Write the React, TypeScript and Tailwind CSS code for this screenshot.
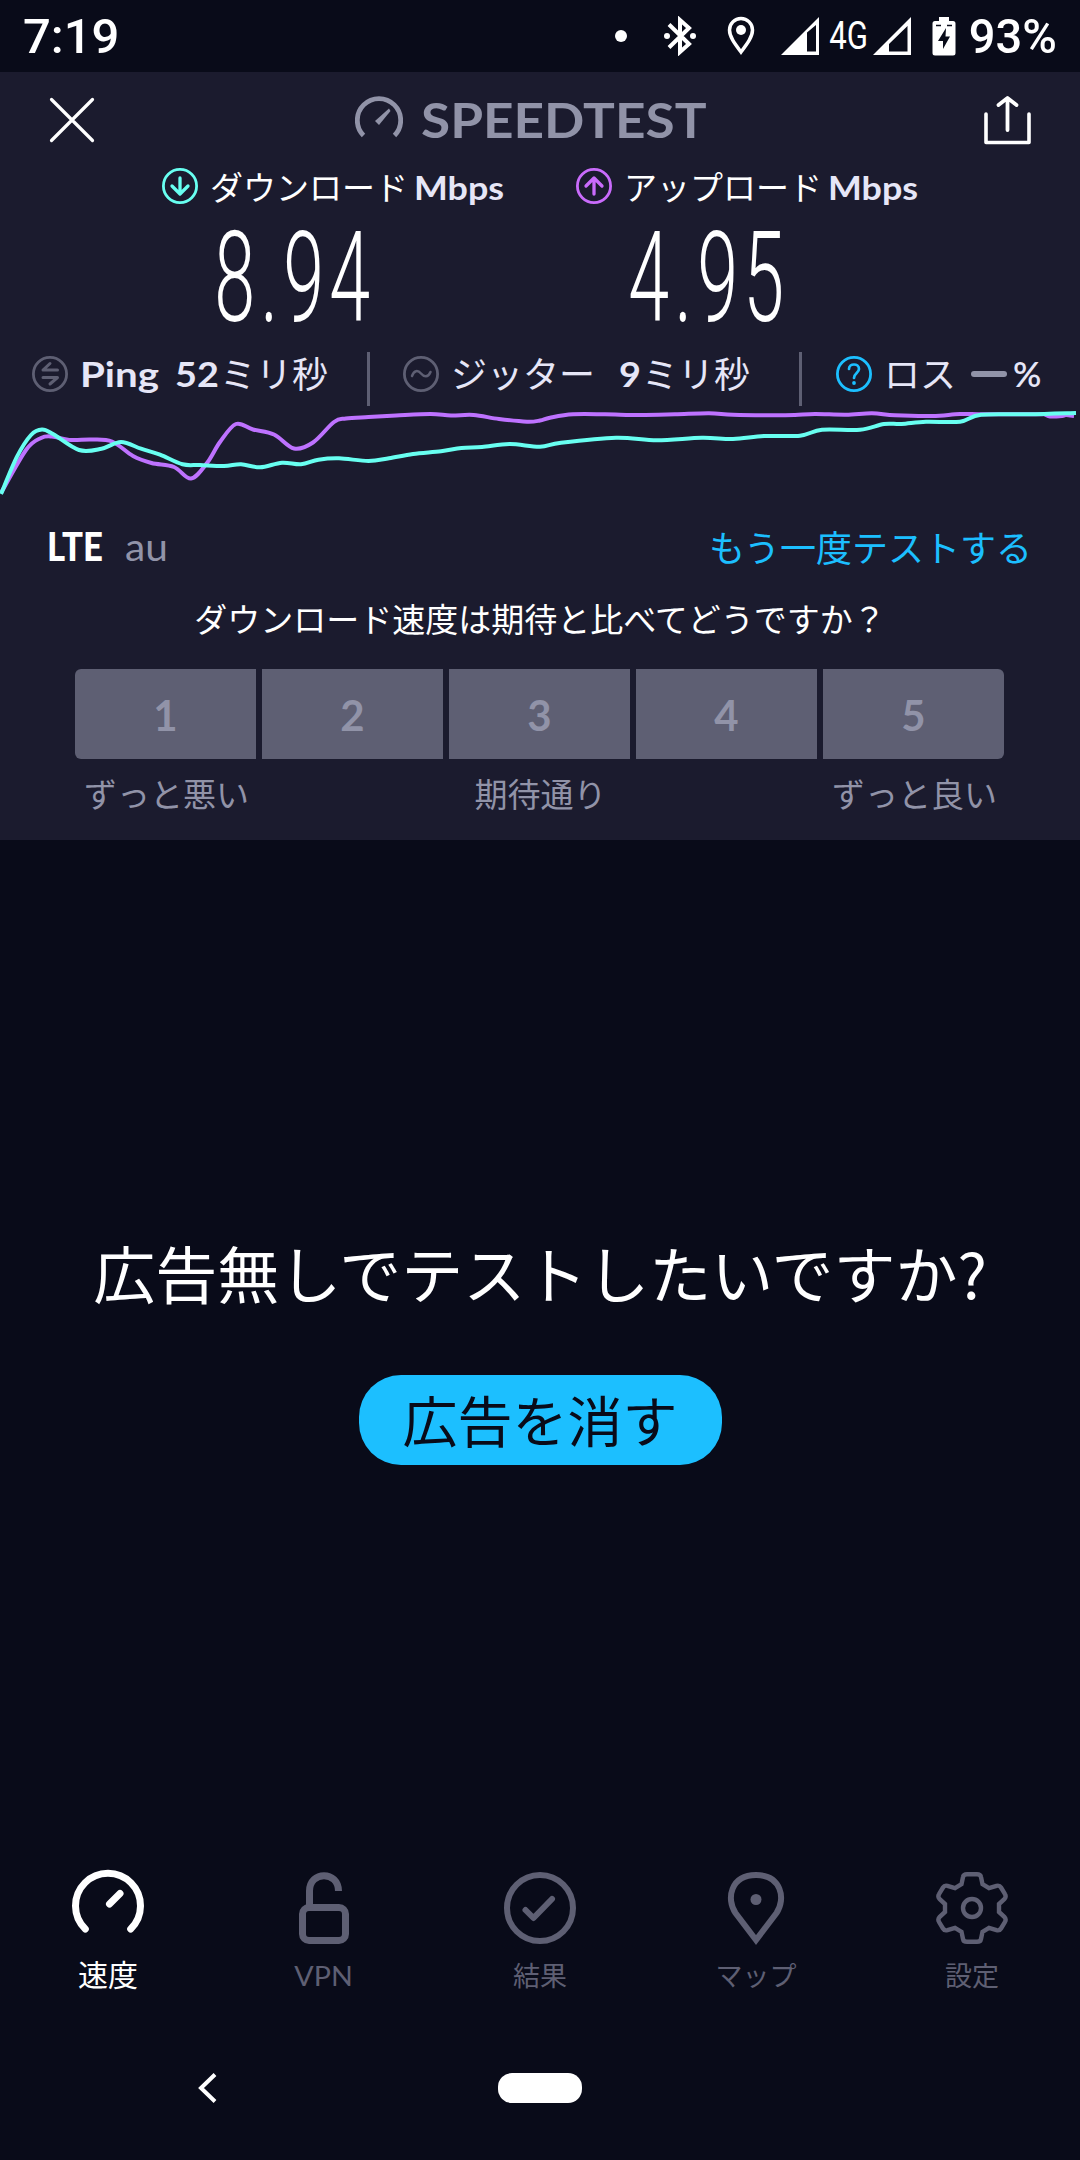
import type { ReactNode } from "react";

const JP = "font-['Noto_Sans_CJK_JP',sans-serif]";

type Pt = [number, number];

const uploadPoints: Pt[] = [
  [1, 493], [26, 450], [41, 438], [52, 436.5], [71, 440], [91, 439.5], [112, 441.5], [133, 456],
  [151.5, 463], [174, 467], [191, 478.5], [207, 463], [220, 442], [236, 424], [253, 429.5], [274, 434.5],
  [294, 448.5], [313, 442.5], [334, 422], [346, 418.5], [368.5, 417], [396, 415.5], [430.5, 414],
  [451, 415.5], [473.5, 415], [499, 419], [527, 421.7], [540, 420.5], [550, 417.7], [573, 414.3],
  [605, 414.3], [640, 415], [675, 414.3], [709, 413.3], [733, 414.7], [774, 415.3], [795, 415], [815, 414],
  [846, 414.7], [872, 413.3], [895, 415.3], [932.5, 416], [960, 414], [984, 414.3], [1036, 414.3],
  [1044, 414.3], [1050, 416.5], [1062, 416], [1066, 415], [1074, 416],
];

const downloadPoints: Pt[] = [
  [1, 494], [17, 456.7], [31, 435], [42, 429.5], [53, 434], [79, 450], [101.5, 448.7], [121, 442],
  [141, 448.7], [160, 454.7], [182.5, 464.3], [200, 465], [224, 466], [241, 464.3], [260, 467.3],
  [282, 462.7], [301, 464.3], [318.5, 459.7], [339, 458.3], [368.5, 461], [389, 458.3], [413, 454],
  [441, 451.3], [461.5, 448], [482, 447], [509.6, 444], [540, 446.7], [561, 442.7], [616, 437.7],
  [657, 440.3], [702, 437.7], [733, 439], [764, 436], [800, 435.7], [822, 429.7], [860, 429.7],
  [884, 424], [901.5, 424], [926, 421.7], [960, 421.7], [981, 414.7], [1029, 414.3], [1076, 413],
];

function smooth(p: Pt[]): string {
  let d = `M${p[0][0]} ${p[0][1]}`;
  for (let i = 0; i < p.length - 1; i++) {
    const a = p[Math.max(i - 1, 0)];
    const b = p[i];
    const c = p[i + 1];
    const e = p[Math.min(i + 2, p.length - 1)];
    d += `C${b[0] + (c[0] - a[0]) / 6} ${b[1] + (c[1] - a[1]) / 6} ${c[0] - (e[0] - b[0]) / 6} ${c[1] - (e[1] - b[1]) / 6} ${c[0]} ${c[1]}`;
  }
  return d;
}

function StatusBar() {
  return (
    <div className="flex h-[72px] items-center font-[Roboto,sans-serif] text-white">
      <span className="ml-[23px] pt-[2px] text-[49px] font-medium leading-[72px]">7:19</span>
      <div className="ml-auto mr-[22px] flex items-center">
        <span className="mr-[37px] size-3 rounded-full bg-white" />
        <svg className="mr-[31px]" width="32" height="40" viewBox="0 0 32 40" fill="none" stroke="#fff">
          <path d="M5 8.500L25 28L16 36V4L25 12L5 31.500" strokeWidth="4" />
          <circle cx="3" cy="20" r="3" fill="#fff" stroke="none" />
          <circle cx="29" cy="20" r="3" fill="#fff" stroke="none" />
        </svg>
        <svg className="mr-[26px]" width="28" height="40" viewBox="0 0 28 40" fill="none" stroke="#fff">
          <path d="M14 36C8 28 2.500 21 2.500 14A11.500 11.500 0 0 1 25.500 14C25.500 21 20 28 14 36Z" strokeWidth="3.500" />
          <circle cx="14" cy="14" r="5" fill="#fff" stroke="none" />
        </svg>
        <svg className="mr-[11px]" width="38" height="38" viewBox="0 0 38 38">
          <path fillRule="evenodd" d="M0 38L38 0V38ZM26 15.500V34.500H35V8Z" fill="#fff" />
        </svg>
        <span className="flex w-[38px] justify-center">
          <span className="scale-x-[0.82] text-[38px] leading-[72px]">4G</span>
        </span>
        <svg className="ml-[5px] mr-[21px]" width="38" height="38" viewBox="0 0 38 38">
          <path fillRule="evenodd" d="M0 38L38 0V38ZM16 27V34.500H34.500V9Z" fill="#fff" />
        </svg>
        <svg className="mr-[11px]" width="24" height="40" viewBox="0 0 24 40">
          <path d="M7 1H17V5H21Q23.500 5 23.500 7.500V37Q23.500 39.500 21 39.500H3Q.5 39.500 .5 37V7.500Q.5 5 3 5H7Z" fill="#fff" />
          <path d="M4 9.500H9M15 9.500H20" stroke="#090b19" strokeWidth="1.300" />
          <path d="M14 12L6 25H11V33L18 20.500H13.500Z" fill="#090b19" />
        </svg>
        <span className="flex w-[91px] justify-center">
          <span className="scale-x-[0.96] pt-[2px] text-[49px] font-medium leading-[72px]">93%</span>
        </span>
      </div>
    </div>
  );
}

function Header() {
  return (
    <div className="flex h-[90px] items-start">
      <svg className="ml-[48px] mt-[24px]" width="48" height="48" viewBox="0 0 48 48">
        <path d="M3.500 3.500L44.500 44.500M44.500 3.500L3.500 44.500" stroke="#fff" strokeWidth="3.200" strokeLinecap="round" />
      </svg>
      <div className="ml-[259px] mt-[24px] flex items-start text-[#9193a8]">
        <svg width="48" height="42" viewBox="0 0 48 42">
          <path d="M8.500 39.500A21.700 21.700 0 1 1 39.500 39.500" fill="none" stroke="currentColor" strokeWidth="4.800" />
          <path d="M20 25L34 12.500L35.500 15L24 29Z" fill="currentColor" />
        </svg>
        <span className="ml-[18px] block w-[300px] origin-left scale-x-[1.13] whitespace-nowrap font-[Lato,sans-serif] text-[47px] font-bold leading-[49px]">
          SPEEDTEST
        </span>
      </div>
      <svg className="ml-auto mr-[48px] mt-[24px]" width="49" height="49" viewBox="0 0 49 49" fill="none" stroke="#fff" strokeLinecap="round" strokeLinejoin="round">
        <path d="M3 18V46.500H46V18" strokeWidth="3.600" />
        <path d="M24.500 34V3M15.500 9L24.500 2L33.500 9" strokeWidth="3.800" />
      </svg>
    </div>
  );
}

function RoundArrow({ up = false }: { up?: boolean }) {
  return (
    <svg width="36" height="36" viewBox="0 0 36 36" fill="none" stroke={up ? "#c96bfb" : "#68fff1"} strokeLinecap="round" strokeLinejoin="round">
      <circle cx="18" cy="18" r="16.600" strokeWidth="2.800" />
      {up ? <path d="M18 26V10.500M10 18L18 10L26 18" strokeWidth="3.300" /> : <path d="M18 10V25.500M10 18L18 26L26 18" strokeWidth="3.300" />}
    </svg>
  );
}

function Speed({ up, label, value }: { up?: boolean; label: string; value: string }) {
  return (
    <div className="w-[360px]">
      <div className="flex h-12 items-center">
        <RoundArrow up={up} />
        <span className={`${JP} ml-[12px] text-[33px] leading-[48px] text-white`}>{label}</span>
        <span className="ml-[6px] mt-[3px] origin-left scale-x-[1.12] font-[Lato,sans-serif] text-[32px] font-bold leading-[45px] text-[#e6e6f7]">Mbps</span>
      </div>
      <div className="flex h-[120px] w-[266px] justify-center pt-[13px]">
        <span className="h-[107px] scale-x-[0.58] font-[Roboto,sans-serif] text-[127px] font-light leading-[109px] tracking-[9px] text-white">{value}</span>
      </div>
    </div>
  );
}

function Stats() {
  return (
    <div className="flex h-[56px] items-center text-[#e6e6f7]">
      <svg className="mb-[10px] ml-[32px]" width="36" height="36" viewBox="-18 -18 36 36" fill="none" stroke="#5e5f73" strokeLinecap="round" strokeLinejoin="round">
        <circle r="16.600" strokeWidth="2.800" />
        <path d="M7.500 -4H-7L0 -10.500M-7 3.500H7.500L0 10" strokeWidth="3" />
      </svg>
      <span className="mb-[11px] ml-[12px] w-[95px] origin-left scale-x-[1.15] font-[Lato,sans-serif] text-[35px] font-bold leading-[45px]">Ping</span>
      <span className="mb-[11px] flex w-[192px] items-center whitespace-nowrap">
        <span className="w-[45px] origin-left scale-x-[1.08] font-[Lato,sans-serif] text-[35px] font-bold leading-[45px]">52</span>
        <span className={`${JP} mb-[2px] text-[36px] leading-[45px]`}>ミリ秒</span>
      </span>
      <span className="h-[54px] w-[3px] bg-[#5e5f73]" />
      <svg className="mb-[10px] ml-[33px]" width="36" height="36" viewBox="-18 -18 36 36" fill="none" stroke="#5e5f73" strokeLinecap="round">
        <circle r="16.600" strokeWidth="2.800" />
        <path d="M-9 2C-7 -4 -3 -4 0 -.500S7 4 9.500 -2" strokeWidth="2.500" />
      </svg>
      <span className={`${JP} mb-[13px] ml-[12px] w-[168px] whitespace-nowrap text-[36px] leading-[43px]`}>ジッター</span>
      <span className="mb-[11px] flex w-[180px] items-center whitespace-nowrap">
        <span className="w-[23px] origin-left scale-x-[1.08] font-[Lato,sans-serif] text-[35px] font-bold leading-[45px]">9</span>
        <span className={`${JP} mb-[2px] text-[36px] leading-[45px]`}>ミリ秒</span>
      </span>
      <span className="h-[54px] w-[3px] bg-[#5e5f73]" />
      <svg className="mb-[10px] ml-[34px]" width="36" height="36" viewBox="-18 -18 36 36" fill="none" stroke="#1cbfff" strokeLinecap="round">
        <circle r="16.600" strokeWidth="2.800" />
        <path d="M-5 -5C-5 -11 5 -11 5 -5C5 -1 0 -1 0 4" strokeWidth="2.700" />
        <circle cy="9" r="1.900" fill="#1cbfff" stroke="none" />
      </svg>
      <span className={`${JP} mb-[13px] ml-[12px] w-[87px] whitespace-nowrap text-[36px] leading-[43px]`}>ロス</span>
      <span className="mb-[10px] h-[6px] w-[36px] rounded-full bg-[#9193a8]" />
      <span className="mb-[11px] ml-[6px] font-[Lato,sans-serif] text-[35px] font-semibold leading-[45px]">%</span>
    </div>
  );
}

const ratings = ["1", "2", "3", "4", "5"];
const captions = ["ずっと悪い", "", "期待通り", "", "ずっと良い"];

function Survey() {
  return (
    <div className={JP}>
      <div className="flex h-[102px] items-center justify-center text-[33px] leading-[48px] text-white">
        ダウンロード速度は期待と比べてどうですか？
      </div>
      <div className="mx-[75px] grid w-[929px] grid-cols-5 gap-[6px]">
        {ratings.map((r) => (
          <div
            key={r}
            className="flex h-[90px] items-center justify-center bg-[#5e5f73] pt-[2px] font-[Lato,sans-serif] text-[42px] font-bold text-[#9193a8] first:rounded-l-md last:rounded-r-md"
          >
            {r}
          </div>
        ))}
      </div>
      <div className="ml-[76px] grid h-[68px] w-[929px] grid-cols-5 items-center gap-[6px] text-center text-[33px] text-[#9193a8]">
        {captions.map((c, i) => (
          <span key={i} className="whitespace-nowrap leading-[48px]">{c}</span>
        ))}
      </div>
    </div>
  );
}

function Tab({ label, active, children }: { label: string; active?: boolean; children: ReactNode }) {
  return (
    <div className={`flex w-[216px] flex-col items-center ${active ? "text-white" : "text-[#5e5f73]"}`}>
      <svg width="80" height="80" viewBox="-40 -40 80 80" fill="none" stroke="currentColor">
        {children}
      </svg>
      <span className={`flex h-[40px] items-center ${active ? "mt-[5px] text-[30px]" : "mt-[7px] text-[27px]"} ${label === "VPN" ? "scale-x-[1.06] pt-[3px] font-[Lato,sans-serif]" : JP}`}>
        {label}
      </span>
    </div>
  );
}

function Tabs() {
  return (
    <div className="flex h-[128px]">
      <Tab label="速度" active>
        <path d="M-22.700 21A32.500 32.500 0 1 1 22.700 21M1.500 -4L12 -14.500" strokeWidth="7" strokeLinecap="round" />
      </Tab>
      <Tab label="VPN">
        <rect x="-21.500" y="-.5" width="43" height="33" rx="6.500" strokeWidth="7" />
        <path d="M-14.500 -.5V-17C-14.500 -37.500 14.500 -37.500 14.500 -17" strokeWidth="7" />
      </Tab>
      <Tab label="結果">
        <circle r="33" strokeWidth="6" />
        <path d="M-14.500 2L-6.500 10L12 -9" strokeWidth="6" strokeLinecap="round" strokeLinejoin="round" />
      </Tab>
      <Tab label="マップ">
        <path d="M0 32L-20.500 5C-30 -9 -25.500 -33 0 -33S30 -9 20.500 5Z" strokeWidth="6" />
        <circle cy="-8.500" r="5.500" fill="currentColor" stroke="none" />
      </Tab>
      <Tab label="設定">
        <path
          d="M-5 -33.800H5Q8.500 -33.800 9 -31L10.500 -23.800L17 -19.800L24.500 -22.200Q27.500 -23 29 -20.500L33 -13.800Q34.500 -11.500 32.500 -9L27 -4V4L32.500 9Q34.500 11.500 33 13.800L29 20.500Q27.500 23 24.500 22.200L17 19.800L10.500 23.800L9 31Q8.500 33.800 5 33.800H-5Q-8.500 33.800 -9 31L-10.500 23.800L-17 19.800L-24.500 22.200Q-27.500 23 -29 20.500L-33 13.800Q-34.500 11.500 -32.500 9L-27 4V-4L-32.500 -9Q-34.500 -11.500 -33 -13.800L-29 -20.500Q-27.500 -23 -24.500 -22.200L-17 -19.800L-10.500 -23.800L-9 -31Q-8.500 -33.800 -5 -33.800Z"
          strokeWidth="4.400"
        />
        <circle r="9" strokeWidth="4.400" />
      </Tab>
    </div>
  );
}

export default function App() {
  return (
    <div className="flex h-[2160px] w-[1080px] flex-col overflow-hidden bg-[#090b19]">
      <StatusBar />
      <div className="h-[768px] bg-[#1b1b2e]">
        <Header />
        <div className="flex h-[184px] gap-[54px] pl-[162px]">
          <Speed label="ダウンロード" value="8.94" />
          <Speed up label="アップロード" value="4.95" />
        </div>
        <div className="mt-[5px]">
          <Stats />
        </div>
        <svg className="block" width="1080" height="109" viewBox="0 407 1080 109" fill="none" strokeWidth="4">
          <path d={smooth(uploadPoints)} stroke="#be72ff" />
          <path d={smooth(downloadPoints)} stroke="#68fff1" />
        </svg>
        <div className="flex h-[51px] items-center pt-[9px]">
          <span className="ml-[47px] w-[78px] origin-left scale-x-[0.89] font-[Lato,sans-serif] text-[39px] font-black leading-[51px] text-white">LTE</span>
          <span className="origin-left scale-x-[1.07] font-[Lato,sans-serif] text-[38px] leading-[51px] text-[#9193a8]">au</span>
          <span className={`${JP} ml-auto mr-[48px] text-[36px] leading-[51px] text-[#1cbfff]`}>もう一度テストする</span>
        </div>
        <Survey />
      </div>
      <div className={`${JP} flex flex-col items-center pt-[387px]`}>
        <p className="whitespace-nowrap text-[62px] leading-[90px] text-white">広告無しでテストしたいですか?</p>
        <div className="mt-[58px] flex h-[90px] w-[363px] items-center justify-center rounded-[42px] bg-[#1cbfff] pb-[4px] text-[55px] leading-[86px] text-[#090b19]">
          広告を消す
        </div>
      </div>
      <div className="mt-auto">
        <Tabs />
        <div className="flex h-[164px] items-start">
          <svg className="ml-[196px] mt-[77px]" width="22" height="30" viewBox="0 0 22 30">
            <path d="M19 1.500L5 15L19 28.500" fill="none" stroke="#fff" strokeWidth="4" />
          </svg>
          <span className="ml-[280px] mt-[77px] h-[30px] w-[84px] rounded-[14px] bg-white" />
        </div>
      </div>
    </div>
  );
}
